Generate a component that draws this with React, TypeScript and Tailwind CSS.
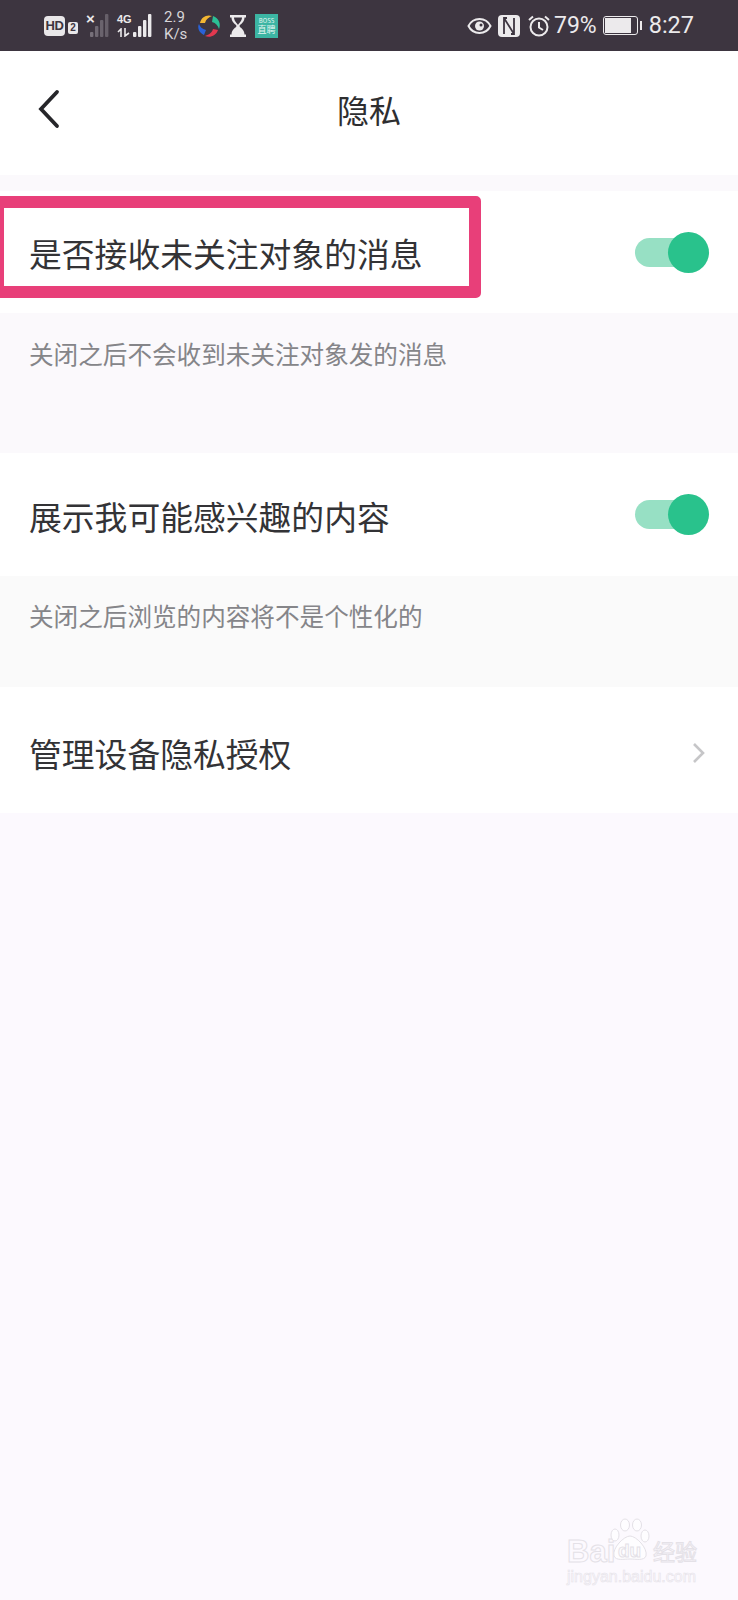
const cjk = "font-['Noto_Sans_CJK_SC','Noto_Sans',sans-serif]";

function Toggle() {
  return (
    <div className="relative h-[41px] w-[74px]">
      <div className="absolute left-0 top-[6px] h-[29px] w-[60px] rounded-full bg-[#97e0c4]" />
      <div className="absolute right-0 top-0 h-[41px] w-[41px] rounded-full bg-[#29c28c]" />
    </div>
  );
}

function Bars({ colors }: { colors: string[] }) {
  return (
    <svg width="19" height="24" viewBox="0 0 19 24">
      {[0, 1, 2, 3].map((i) => (
        <rect key={i} x={i * 5} y={18 - i * 6} width="3.400" height={5 + i * 6} rx="1" fill={colors[i]} />
      ))}
    </svg>
  );
}

function StatusBar() {
  return (
    <div className="flex h-[51px] items-center justify-between bg-[#3d3540] pl-[44px] pr-[44px] text-[#eceaec]">
      <div className="flex items-center">
        <div className="flex h-[20px] w-[21px] items-center justify-center rounded-[4px] bg-[#e9e7e9] font-['Liberation_Sans',sans-serif] text-[13px] font-bold leading-none tracking-[-0.5px] text-[#3d3540]">
          HD
        </div>
        <div className="ml-[3px] mt-[4px] flex h-[12px] w-[10px] items-center justify-center rounded-[2px] bg-[#e9e7e9] font-['Liberation_Sans',sans-serif] text-[10px] font-bold leading-none text-[#3d3540]">
          2
        </div>
        <div className="relative ml-[8px] h-[24px] w-[23px]">
          <span className="absolute left-0 top-[-3px] font-['Liberation_Sans',sans-serif] text-[15px] font-bold leading-none">×</span>
          <div className="absolute right-0 top-0">
            <Bars colors={["#77707a", "#6f6872", "#6a636d", "#665f69"]} />
          </div>
        </div>
        <div className="relative ml-[8px] h-[24px] w-[35px]">
          <span className="absolute left-0 top-[0px] font-['Liberation_Sans',sans-serif] text-[11px] font-bold leading-none">4G</span>
          <svg className="absolute left-0 top-[14px]" width="14" height="9" viewBox="0 0 14 9" fill="none" stroke="#eceaec" strokeWidth="1.600">
            <path d="M4 9V1L1 4M8 0V8L12 5" />
          </svg>
          <div className="absolute right-0 top-0">
            <Bars colors={["#eceaec", "#eceaec", "#eceaec", "#eceaec"]} />
          </div>
        </div>
        <div className="ml-[12px] w-[26px] font-['Roboto',sans-serif] text-[15px] leading-[17px] text-[#d8d5d9]">
          <div>2.9</div>
          <div>K/s</div>
        </div>
        <svg className="ml-[7px]" width="24" height="24" viewBox="0 0 24 24">
          <path d="M3 9C4 3 10 0 15 2C12 3 9 5 8 9Z" fill="#f2b632" />
          <path d="M16 2C22 4 24 10 22 15C21 12 19 9 15 8Z" fill="#2bbf95" />
          <path d="M21 16C19 22 13 24 8 22C11 21 15 19 16 15Z" fill="#e2384f" />
          <path d="M7 21C2 19 0 13 2 10C3 13 5 15 9 16Z" fill="#2a62d8" />
        </svg>
        <svg className="ml-[8px]" width="18" height="24" viewBox="0 0 18 24">
          <path d="M1 1H17V3.500H15.500C15.500 9 11 10 10.500 12C11 14 15.500 15 15.500 20.500H17V23H1V20.500H2.500C2.500 15 7 14 7.500 12C7 10 2.500 9 2.500 3.500H1Z" fill="#eceaec" />
          <path d="M5 3.500H13C13 7 10 9 9 11C8 9 5 7 5 3.500Z" fill="#3d3540" />
        </svg>
        <div className="ml-[8px] flex h-[24px] w-[23px] flex-col items-center justify-center bg-[#3cb5a3] font-['Noto_Sans_CJK_SC',sans-serif] leading-none text-[#e6f6f2]">
          <span className="text-[6px] leading-[8px]">BOSS</span>
          <span className="text-[9px] leading-[10px]">直聘</span>
        </div>
      </div>
      <div className="flex items-center">
        <svg width="25" height="18" viewBox="0 0 25 18" fill="none">
          <path d="M1.500 9C4 4 8 2 12.500 2S21 4 23.500 9C21 14 17 16 12.500 16S4 14 1.500 9Z" stroke="#eceaec" strokeWidth="2" />
          <circle cx="12.500" cy="9" r="4.500" fill="#eceaec" />
          <circle cx="14" cy="8" r="1.500" fill="#3d3540" />
        </svg>
        <div className="ml-[6px] flex h-[22px] w-[22px] items-center justify-center rounded-[4px] bg-[#eceaec]">
          <svg width="16" height="18" viewBox="0 0 16 18" fill="none" stroke="#3d3540" strokeWidth="1.800">
            <path d="M3 17V1L13 17V1M6 1H3M13 17H10" />
          </svg>
        </div>
        <svg className="ml-[7px]" width="24" height="24" viewBox="0 0 24 24" fill="none" stroke="#eceaec" strokeWidth="2">
          <circle cx="12" cy="13" r="8.500" />
          <path d="M12 8V13.500L16 16M2 6L6 2.500M22 6L18 2.500" />
        </svg>
        <span className="ml-[3px] font-['Roboto',sans-serif] text-[23px] leading-none">79%</span>
        <div className="ml-[6px] flex items-center">
          <div className="h-[19px] w-[35px] rounded-[3px] border border-[#eceaec] p-[1px]">
            <div className="h-full w-[26px] bg-[#eceaec]" />
          </div>
          <div className="ml-[2px] h-[9px] w-[2px] bg-[#eceaec]" />
        </div>
        <span className="ml-[7px] font-['Roboto',sans-serif] text-[23.500px] leading-none">8:27</span>
      </div>
    </div>
  );
}

function Watermark() {
  return (
    <div className="absolute left-[566px] top-[1518px] h-[68px] w-[134px] select-none">
      <span className="absolute left-[1px] top-[16px] font-['Liberation_Sans',sans-serif] text-[31px] font-bold leading-[36px] text-transparent [-webkit-text-stroke:1px_#e4e1e7]">
        Bai
      </span>
      <svg className="absolute left-[43px] top-0" width="42" height="44" viewBox="0 0 42 44" fill="#fefdff" stroke="#e4e1e7" strokeWidth="1">
        <ellipse cx="6" cy="17" rx="4" ry="6" />
        <ellipse cx="16" cy="7" rx="4.500" ry="6" />
        <ellipse cx="28" cy="7" rx="4.500" ry="6" />
        <ellipse cx="36" cy="18" rx="4" ry="6" />
        <path d="M21 18C27 18 39 30 37 38C35 43 27 41 21 41S7 43 5 38C3 30 15 18 21 18Z" />
      </svg>
      <span className="absolute left-[52px] top-[23px] font-['Liberation_Sans',sans-serif] text-[19px] font-bold leading-[20px] text-transparent [-webkit-text-stroke:1px_#e4e1e7]">
        du
      </span>
      <span className={`absolute left-[87px] top-[19px] ${cjk} text-[22px] leading-[26px] text-transparent [-webkit-text-stroke:1px_#e4e1e7]`}>
        经验
      </span>
      <span className="absolute left-[1px] top-[50px] font-['Liberation_Sans',sans-serif] text-[16px] leading-[18px] text-transparent [-webkit-text-stroke:0.6px_#e6e3e9]">
        jingyan.baidu.com
      </span>
    </div>
  );
}

export default function App() {
  return (
    <div className={`relative h-[1600px] w-[738px] overflow-hidden bg-[#fcf9fe] ${cjk}`}>
      <StatusBar />
      <div className="relative flex h-[124px] items-center justify-center bg-white">
        <svg className="absolute left-[36px] top-[37px]" width="25" height="42" viewBox="0 0 25 42" fill="none" stroke="#26262a" strokeWidth="3.800" strokeLinecap="round">
          <path d="M21 4L5 21L21 38" />
        </svg>
        <span className="mt-[-8px] text-[32px] leading-[40px] text-[#2e2e30]">隐私</span>
      </div>
      <div className="h-[16px] bg-[#fbf9fc]" />

      <div className="flex h-[122px] items-center justify-between bg-white pl-[29px] pr-[29px]">
        <span className="mt-[1px] text-[32.800px] leading-[40px] text-[#333336]">是否接收未关注对象的消息</span>
        <Toggle />
      </div>
      <div className="h-[140px] bg-[#fbf9fc] pl-[29px] pt-[26px]">
        <span className="text-[24.600px] leading-[28px] text-[#858589]">关闭之后不会收到未关注对象发的消息</span>
      </div>

      <div className="flex h-[123px] items-center justify-between bg-white pl-[29px] pr-[29px]">
        <span className="mt-[3px] text-[32.800px] leading-[40px] text-[#333336]">展示我可能感兴趣的内容</span>
        <Toggle />
      </div>
      <div className="h-[111px] bg-[#fafafa] pl-[29px] pt-[25px]">
        <span className="text-[24.600px] leading-[28px] text-[#858589]">关闭之后浏览的内容将不是个性化的</span>
      </div>

      <div className="flex h-[126px] items-center justify-between bg-white pl-[29px] pr-[32px]">
        <span className="mt-[5px] text-[32.800px] leading-[40px] text-[#333336]">管理设备隐私授权</span>
        <svg className="mt-[6px]" width="14" height="22" viewBox="0 0 14 22" fill="none" stroke="#c6c6c8" strokeWidth="2.600">
          <path d="M2 2L11 11L2 20" />
        </svg>
      </div>

      <div className="absolute left-[-8px] top-[196px] h-[102px] w-[489px] rounded-[5px] border-[12px] border-[#e83f79]" />
      <Watermark />
    </div>
  );
}
